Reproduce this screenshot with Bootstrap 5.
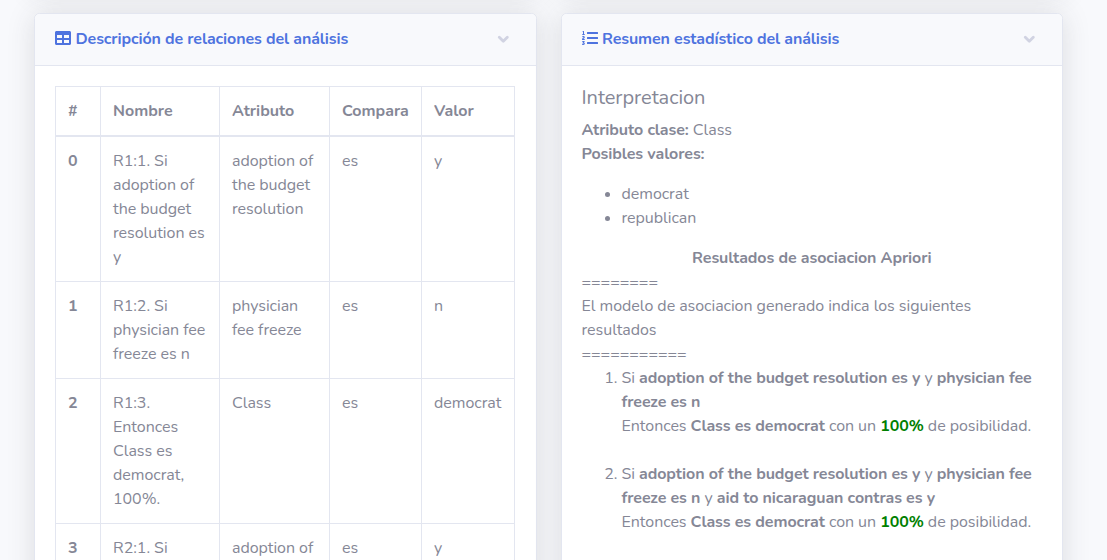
<!DOCTYPE html>
<html lang="es">
<head>
<meta charset="utf-8">
<meta name="viewport" content="width=device-width, initial-scale=1">
<title>Análisis</title>
<link href="https://cdn.jsdelivr.net/npm/bootstrap@5.3.0/dist/css/bootstrap.min.css" rel="stylesheet">
<style>
  body { font-family: Nunito, Lato, "Open Sans", sans-serif; font-size: 16px; line-height: 24px; color: #858796; background: #f8f9fc; }
  .view { height: 560px; overflow: hidden; }
  .page { width: 1053px; margin-left: 22px; margin-top: -111px; --bs-gutter-x: 24px; }
  .panel { border: 1px solid #e3e6f0; border-radius: 5.6px; box-shadow: 0 2.4px 28px rgba(58,59,69,.15); color: #858796; }
  .panel-prev { height: 100px; }
  .panel-main { height: 640px; }
  .panel .card-header { background: #f8f9fc; border-bottom: 1px solid #e3e6f0; padding: 16px 20px; height: 52px; border-radius: 5px 5px 0 0; }
  .panel .card-body { padding: 20px; }
  .panel h6 { color: #4e73df; font-size: 16px; line-height: 19px; white-space: nowrap; letter-spacing: -.1px; }
  .panel h6 svg { margin-right: 4.5px; margin-top: -3px; }
  .chev { margin-top: -2px; }
  .rules { table-layout: fixed; width: 460px; border-collapse: collapse; white-space: nowrap; }
  .rules th, .rules td { border: 1px solid #e3e6f0; padding: 12px; vertical-align: top; }
  .rules td { letter-spacing: -.04px; }
  .rules thead th { border-bottom-width: 2px; }
  .results { white-space: nowrap; letter-spacing: -.045px; }
  .results h5 { font-size: 20px; line-height: 24px; font-weight: 400; }
  .results ul, .results ol { padding-left: 40px; }
  .results b, .rules th { font-weight: 700; }
  .results b { letter-spacing: -.085px; }
  .results .rule-line { padding-top: 1px; margin-bottom: -1px; }
  .pct { color: green; }
</style>
</head>
<body>
<div class="view">
<div class="row page">
  <div class="col-6 mb-4"><div class="card panel panel-prev"></div></div>
  <div class="col-6 mb-4"><div class="card panel panel-prev"></div></div>
  <div class="col-6">
    <div class="card panel panel-main">
      <div class="card-header d-flex align-items-center justify-content-between">
        <h6 class="m-0 fw-bold d-flex align-items-center"><svg width="16" height="16" viewBox="0 0 512 512" fill="currentColor"><path d="M464 32H48C21.49 32 0 53.49 0 80v352c0 26.51 21.49 48 48 48h416c26.51 0 48-21.49 48-48V80c0-26.51-21.49-48-48-48zM224 416H64v-96h160v96zm0-160H64v-96h160v96zm224 160H288v-96h160v96zm0-160H288v-96h160v96z"/></svg><span>Descripción de relaciones del análisis</span></h6>
        <svg class="chev" width="24" height="16" viewBox="0 0 24 16" fill="none" stroke="#d1d3e2" stroke-width="2.9" stroke-linecap="round" stroke-linejoin="round"><path d="M7.3 6.3 11.3 10.2 15.3 6.3"/></svg>
      </div>
      <div class="card-body">
        <table class="rules">
          <colgroup><col style="width:45px"><col style="width:119px"><col style="width:110px"><col style="width:92px"><col style="width:93px"></colgroup>
          <thead><tr><th>#</th><th>Nombre</th><th>Atributo</th><th>Compara</th><th>Valor</th></tr></thead>
          <tbody>
            <tr><th>0</th><td>R1:1. Si<br>adoption of<br>the budget<br>resolution es<br>y</td><td>adoption of<br>the budget<br>resolution</td><td>es</td><td>y</td></tr>
            <tr><th>1</th><td>R1:2. Si<br>physician fee<br>freeze es n</td><td>physician<br>fee freeze</td><td>es</td><td>n</td></tr>
            <tr><th>2</th><td>R1:3.<br>Entonces<br>Class es<br>democrat,<br>100%.</td><td>Class</td><td>es</td><td>democrat</td></tr>
            <tr><th>3</th><td>R2:1. Si</td><td>adoption of</td><td>es</td><td>y</td></tr>
          </tbody>
        </table>
      </div>
    </div>
  </div>
  <div class="col-6">
    <div class="card panel panel-main">
      <div class="card-header d-flex align-items-center justify-content-between">
        <h6 class="m-0 fw-bold d-flex align-items-center"><svg width="16" height="16" viewBox="0 0 512 512" fill="currentColor"><path d="M61.77 401l17.5-20.15a19.92 19.92 0 0 0 5.07-14.19v-3.31C84.34 356 80.5 352 73 352H16a8 8 0 0 0-8 8v16a8 8 0 0 0 8 8h22.83a157.41 157.41 0 0 0-11 12.31l-5.61 7c-4 5.07-5.25 10.13-2.8 14.88l1.05 1.93c3 5.76 6.29 7.88 12.25 7.88h4.73c10.33 0 15.94 2.44 15.94 9.09 0 4.72-4.2 8.22-14.36 8.22a41.54 41.54 0 0 1-15.47-3.12c-6.49-3.88-11.74-3.5-15.6 3.12l-5.59 9.31c-3.72 6.13-3.19 11.72 2.63 15.94 7.71 4.69 20.38 9.44 37 9.44 34.16 0 48.5-22.75 48.5-44.12-.03-14.38-9.12-29.76-28.73-34.88zM496 224H176a16 16 0 0 0-16 16v32a16 16 0 0 0 16 16h320a16 16 0 0 0 16-16v-32a16 16 0 0 0-16-16zm0-160H176a16 16 0 0 0-16 16v32a16 16 0 0 0 16 16h320a16 16 0 0 0 16-16V80a16 16 0 0 0-16-16zm0 320H176a16 16 0 0 0-16 16v32a16 16 0 0 0 16 16h320a16 16 0 0 0 16-16v-32a16 16 0 0 0-16-16zM16 160h64a8 8 0 0 0 8-8v-16a8 8 0 0 0-8-8H64V40a8 8 0 0 0-8-8H32a8 8 0 0 0-7.14 4.42l-8 16A8 8 0 0 0 24 64h8v64H16a8 8 0 0 0-8 8v16a8 8 0 0 0 8 8zm-3.91 160H80a8 8 0 0 0 8-8v-16a8 8 0 0 0-8-8H41.32c3.29-10.29 48.34-18.68 48.34-56.44 0-29.06-25-39.56-44.47-39.56-21.36 0-33.8 10-40.46 18.75-4.37 5.59-3 10.84 2.8 15.37l8.58 6.88c5.61 4.56 11 2.47 16.12-2.44a13.44 13.44 0 0 1 9.46-3.84c3.33 0 9.28 1.56 9.28 8.75C51 248.19 0 257.31 0 304.59v4C0 316 5.08 320 12.09 320z"/></svg><span>Resumen estadístico del análisis</span></h6>
        <svg class="chev" width="24" height="16" viewBox="0 0 24 16" fill="none" stroke="#d1d3e2" stroke-width="2.9" stroke-linecap="round" stroke-linejoin="round"><path d="M7.3 6.3 11.3 10.2 15.3 6.3"/></svg>
      </div>
      <div class="card-body results">
        <h5 class="mb-2">Interpretacion</h5>
        <div><b>Atributo clase:</b> Class</div>
        <div class="mb-3"><b>Posibles valores:</b></div>
        <ul class="mb-3"><li>democrat</li><li>republican</li></ul>
        <div class="text-center"><b>Resultados de asociacion Apriori</b></div>
        <div class="rule-line">========</div>
        <div>El modelo de asociacion generado indica los siguientes<br>resultados</div>
        <div class="rule-line">===========</div>
        <ol>
          <li class="mb-4">Si <b>adoption of the budget resolution es y</b> y <b>physician fee<br>freeze es n</b><br>Entonces <b>Class es democrat</b> con un <b class="pct">100%</b> de posibilidad.</li>
          <li>Si <b>adoption of the budget resolution es y</b> y <b>physician fee<br>freeze es n</b> y <b>aid to nicaraguan contras es y</b><br>Entonces <b>Class es democrat</b> con un <b class="pct">100%</b> de posibilidad.</li>
        </ol>
      </div>
    </div>
  </div>
</div>
</div>
<script src="https://cdn.jsdelivr.net/npm/bootstrap@5.3.0/dist/js/bootstrap.bundle.min.js"></script>
</body>
</html>
